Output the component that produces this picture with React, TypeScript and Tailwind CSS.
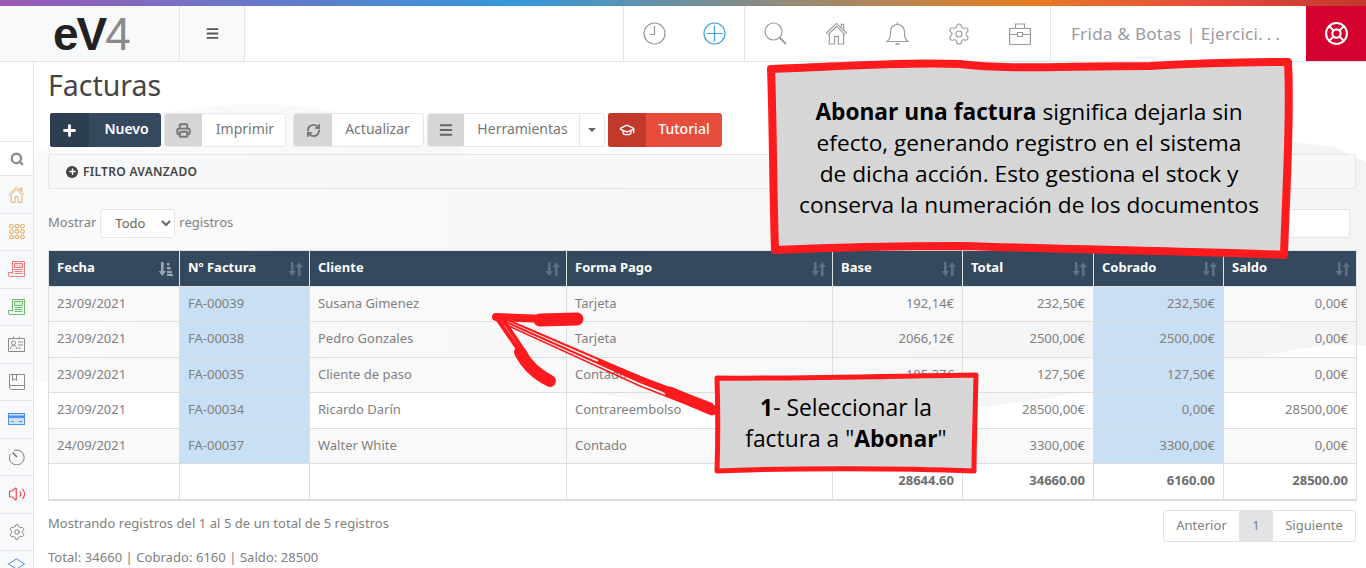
import { Search, Settings, LifeBuoy, Menu, Plus, Printer, RefreshCw, GraduationCap, Volume2 } from 'lucide-react';

const rows = [
  { fecha: '23/09/2021', num: 'FA-00039', cliente: 'Susana Gimenez', pago: 'Tarjeta', base: '192,14€', total: '232,50€', cobrado: '232,50€', saldo: '0,00€' },
  { fecha: '23/09/2021', num: 'FA-00038', cliente: 'Pedro Gonzales', pago: 'Tarjeta', base: '2066,12€', total: '2500,00€', cobrado: '2500,00€', saldo: '0,00€' },
  { fecha: '23/09/2021', num: 'FA-00035', cliente: 'Cliente de paso', pago: 'Contado', base: '105,37€', total: '127,50€', cobrado: '127,50€', saldo: '0,00€' },
  { fecha: '23/09/2021', num: 'FA-00034', cliente: 'Ricardo Darín', pago: 'Contrareembolso', base: '23553,72€', total: '28500,00€', cobrado: '0,00€', saldo: '28500,00€' },
  { fecha: '24/09/2021', num: 'FA-00037', cliente: 'Walter White', pago: 'Contado', base: '2727,27€', total: '3300,00€', cobrado: '3300,00€', saldo: '0,00€' },
];

const headers = ['Fecha', 'Nº Factura', 'Cliente', 'Forma Pago', 'Base', 'Total', 'Cobrado', 'Saldo'];

function SortIcon({ active }: { active?: boolean }) {
  return (
    <svg width="15" height="14" viewBox="0 0 15 14" className="absolute right-[6px] top-[11px]" fill={active ? '#9aa6b2' : '#5f7083'}>
      <path d="M3 0h2.6v9H8L4.3 14 .6 9H3z" />
      {active ? (
        <path d="M9 1h2.5v2.5H9zM9 5h3.5v2.5H9zM9 9h5v2.2H9zM9 12h6v2H9z" />
      ) : (
        <path d="M10 14h2.6V5H15L11.3 0 7.6 5H10z" />
      )}
    </svg>
  );
}

// house with the chimney and double roof line, used in header and sidebar
function IconHouse({ size, color }: { size: number; color: string }) {
  return (
    <svg width={size} height={size} viewBox="0 0 24 24" fill="none" stroke={color} strokeWidth="1.2">
      <path d="M1 12 12 1.5 23 12M3 13.5 12 4.5 21 13.5" />
      <path d="M17 6V2.5h2.5v6" />
      <path d="M4.5 12.5V23h5.5v-8h4v8h5.5V12.5" />
    </svg>
  );
}

function IconClock() {
  return (
    <svg width="23" height="23" viewBox="0 0 23 23" fill="none" stroke="#9a9a9a" strokeWidth="1.2">
      <circle cx="11.5" cy="11.5" r="10.5" />
      <path d="M11.5 4v8.5H6.5" />
    </svg>
  );
}

function IconAdd() {
  return (
    <svg width="23" height="23" viewBox="0 0 23 23" fill="none" stroke="#3f9fe0" strokeWidth="1.2">
      <circle cx="11.5" cy="11.5" r="10.5" />
      <path d="M11.5 3.5v16M3.5 11.5h16" />
    </svg>
  );
}

function IconLens() {
  return (
    <svg width="23" height="23" viewBox="0 0 23 23" fill="none" stroke="#9a9a9a" strokeWidth="1.2">
      <circle cx="9.5" cy="9.5" r="8.5" />
      <path d="M15.5 15.5 22 22" strokeWidth="1.8" />
    </svg>
  );
}

function IconBell() {
  return (
    <svg width="23" height="24" viewBox="0 0 23 24" fill="none" stroke="#9a9a9a" strokeWidth="1.2">
      <path d="M1 19.5c2.5-2 3.5-3.5 3.5-7.5V9.5C4.5 5.5 7.5 2.5 11.5 2.5s7 3 7 7V12c0 4 1 5.5 3.5 7.5z" />
      <path d="M11.5.5v2M9.5 22h4" strokeWidth="1.6" />
    </svg>
  );
}

function IconBag() {
  return (
    <svg width="22" height="22" viewBox="0 0 22 22" fill="none" stroke="#9a9a9a" strokeWidth="1.2">
      <path d="M.6 5.5h20.800v16H.6zM6.500 5.500V1h9v4.500M.6 11.500h7.900M13.500 11.500h7.900" />
      <path d="M8.500 9.500h5v4h-5z" />
    </svg>
  );
}

function IconPaper({ color, tint }: { color: string; tint: string }) {
  return (
    <svg width="17" height="16" viewBox="0 0 17 16" fill="none" stroke={color} strokeWidth="1">
      <path d="M4.5 12.5V.5h12v15H2a1.5 1.5 0 0 1-1.5-1.5v-2.5h4" />
      <path d="M6.5 2.5h8v4h-8z" fill={tint} />
      <path d="M6.5 8.5h8M6.5 10.5h8M6.5 12.5h8" />
    </svg>
  );
}

function IconGrid() {
  const spots = [2.5, 8, 13.5];
  return (
    <svg width="16" height="15" viewBox="0 0 16 15" fill="none" stroke="#e8a04c" strokeWidth="1">
      {spots.map((y) => spots.map((x) => <circle key={`${x}-${y}`} cx={x} cy={y - 0.5} r="1.9" />))}
    </svg>
  );
}

function IconContact() {
  return (
    <svg width="17" height="16" viewBox="0 0 17 16" fill="none" stroke="#8a8a8a" strokeWidth="1">
      <path d="M.5 2.5h16v13H.5zM5.5 2.5V.5M11.5 2.5V.5" />
      <circle cx="5.5" cy="7" r="2" />
      <path d="M2.5 13c0-2.5 1-3.5 3-3.5s3 1 3 3.5M10 6h5M10 9h5M10 12h3" />
    </svg>
  );
}

function IconBook() {
  return (
    <svg width="16" height="16" viewBox="0 0 16 16" fill="none" stroke="#8a8a8a" strokeWidth="1">
      <path d="M.5 13V.5h15v15H2.5a2 2 0 0 1-2-2.5 2 2 0 0 1 2-1.5h13" />
      <path d="M3.5.5v6l2-1.5 2 1.5v-6" />
    </svg>
  );
}

function IconCard() {
  return (
    <svg width="17" height="12" viewBox="0 0 17 12">
      <rect x="0.5" y="0.5" width="16" height="11" fill="#cfe0fb" stroke="#4f8df0" />
      <rect x="0.5" y="2.5" width="16" height="2.5" fill="#4f8df0" />
      <path d="M3 8.5h3M11 8.5h3" stroke="#4f8df0" />
    </svg>
  );
}

function IconGauge() {
  return (
    <svg width="16" height="16" viewBox="0 0 16 16" fill="none" stroke="#777" strokeWidth="1">
      <path d="M5 1.6A7.4 7.4 0 1 1 1.2 5" />
      <path d="M3.5 3.5 8 8" strokeWidth="1.6" />
    </svg>
  );
}

function IconHat() {
  return (
    <svg width="17" height="12" viewBox="0 0 17 12" fill="none" stroke="#4f8df0" strokeWidth="1">
      <path d="M.5 6 8.5.8 16.5 6 8.5 11z" />
    </svg>
  );
}

const sideIcon = 'flex h-[37.5px] items-center justify-center border-b border-[#e3e5ea]';

function Sidebar() {
  return (
    <aside className="relative flex w-[34px] shrink-0 flex-col border-r border-[#e3e5ea] bg-white">
      <div className="h-[80px] shrink-0 border-b border-[#e3e5ea]" />
      <div className="flex h-[34px] shrink-0 items-center justify-center border-b border-[#e3e5ea]">
        <Search size={14} strokeWidth={4} color="#8c8c8c" />
      </div>
      <div className="flex-1 bg-[#f8f9fb]">
        <div className={sideIcon}><IconHouse size={17} color="#e8a04c" /></div>
        <div className={sideIcon}><IconGrid /></div>
        <div className={sideIcon}><IconPaper color="#f0787c" tint="#fbd9da" /></div>
        <div className={sideIcon}><IconPaper color="#6cbb6c" tint="#d8efd8" /></div>
        <div className={sideIcon}><IconContact /></div>
        <div className={sideIcon}><IconBook /></div>
        <div className={sideIcon}><IconCard /></div>
        <div className={sideIcon}><IconGauge /></div>
        <div className={sideIcon}><Volume2 size={18} strokeWidth={1.5} color="#f0414f" /></div>
        <div className={sideIcon}><Settings size={18} strokeWidth={1.2} color="#777777" /></div>
        <div className="flex justify-center pt-[7px]"><IconHat /></div>
      </div>
    </aside>
  );
}

function Header() {
  return (
    <header className="flex h-[56px] shrink-0 border-b border-[#e3e5ea] bg-white">
      <div className="flex w-[180px] shrink-0 items-center border-r border-[#e3e5ea] bg-[#f8f9fb] pl-[53px]">
        <span className="text-[46px] leading-none font-bold tracking-[-2px] text-[#222] [font-family:'Liberation_Sans',sans-serif]">
          eV<span className="font-normal text-[#8a8a8a]">4</span>
        </span>
      </div>
      <div className="flex w-[65px] shrink-0 items-center justify-center border-r border-[#e3e5ea] bg-[#f8f9fb]">
        <Menu size={15} strokeWidth={3} color="#555555" />
      </div>
      <div className="flex-1" />
      <div className="flex w-[122px] items-center justify-around border-l border-r border-[#e3e5ea]">
        <IconClock />
        <IconAdd />
      </div>
      <div className="flex w-[306px] items-center justify-around border-r border-[#e3e5ea]">
        <IconLens />
        <IconHouse size={23} color="#9a9a9a" />
        <IconBell />
        <Settings size={24} strokeWidth={1.1} color="#9a9a9a" />
        <IconBag />
      </div>
      <div className="flex w-[255px] items-center pl-[20px] text-[17px] tracking-[0.3px] whitespace-nowrap text-[#9a9aa0]">
        Frida &amp; Botas | Ejercici<span className="tracking-[4px]">...</span>
      </div>
      <div className="flex w-[60px] items-center justify-center bg-[#d6002f]">
        <LifeBuoy size={25} strokeWidth={2} color="#ffffff" />
      </div>
    </header>
  );
}

function ToolButton({ icon, label, iconBg, bodyBg, text, w, iconW }: { icon: React.ReactNode; label: string; iconBg: string; bodyBg: string; text: string; w: string; iconW: string }) {
  return (
    <div className={`flex h-[34px] overflow-hidden rounded-[3px] ${w} ${bodyBg}`}>
      <div className={`flex shrink-0 items-center justify-center ${iconW} ${iconBg}`}>{icon}</div>
      <div className={`flex flex-1 items-center justify-center pb-[3px] text-[14px] ${text}`}>{label}</div>
    </div>
  );
}

function Toolbar() {
  return (
    <div className="flex h-[34px] items-center pl-[2px]">
      <ToolButton w="w-[111px]" iconW="w-[39px]" iconBg="bg-[#2c3e50]" bodyBg="bg-[#34495e]" text="pl-[3px] font-semibold text-white" label="Nuevo" icon={<Plus size={17} strokeWidth={4} color="#ffffff" />} />
      <div className="ml-[3px]">
        <ToolButton w="w-[122px] border border-[#e8e8e8]" iconW="w-[37px]" iconBg="bg-[#d6d6d6]" bodyBg="bg-white" text="pl-[3px] text-[#777777]" label="Imprimir" icon={<Printer size={15} strokeWidth={3} color="#777777" />} />
      </div>
      <div className="ml-[7px]">
        <ToolButton w="w-[131px] border border-[#e8e8e8]" iconW="w-[38px]" iconBg="bg-[#d6d6d6]" bodyBg="bg-white" text="text-[#777777]" label="Actualizar" icon={<RefreshCw size={15} strokeWidth={3} color="#777777" />} />
      </div>
      <div className="ml-[3px] flex h-[34px] w-[178px] overflow-hidden rounded-[3px] border border-[#e8e8e8] bg-white">
        <div className="flex w-[36px] shrink-0 items-center justify-center bg-[#d6d6d6]"><Menu size={16} strokeWidth={3} color="#666666" /></div>
        <div className="flex flex-1 items-center justify-center pb-[3px] pl-[2px] text-[14px] text-[#777777]">Herramientas</div>
        <div className="flex w-[25px] shrink-0 items-center justify-center border-l border-[#e8e8e8]">
          <span className="h-0 w-0 border-x-[4px] border-t-[4px] border-x-transparent border-t-[#666666]" />
        </div>
      </div>
      <div className="ml-[3px]">
        <ToolButton w="w-[114px]" iconW="w-[38px]" iconBg="bg-[#c0392b]" bodyBg="bg-[#e74c3c]" text="font-medium text-white" label="Tutorial" icon={<GraduationCap size={16} strokeWidth={2} color="#ffffff" />} />
      </div>
    </div>
  );
}

function InvoiceTable() {
  return (
    <table className="w-[1308px] table-fixed border-collapse border-b-2 border-[#dddddd] text-[13px] text-[#808080]">
      <colgroup>
        <col className="w-[131px]" />
        <col className="w-[130px]" />
        <col className="w-[257px]" />
        <col className="w-[266px]" />
        <col className="w-[130px]" />
        <col className="w-[131px]" />
        <col className="w-[130px]" />
        <col className="w-[133px]" />
      </colgroup>
      <thead>
        <tr className="h-[36px] bg-[#34495e] text-white">
          {headers.map((h, i) => (
            <th key={h} className="relative border border-[#dfe3e8] px-[8px] pb-[2px] text-left text-[13px] font-bold">
              {h}
              <SortIcon active={i === 0} />
            </th>
          ))}
        </tr>
      </thead>
      <tbody>
        {rows.map((r, i) => (
          <tr key={r.num} className={i % 2 === 0 ? 'h-[35px] bg-[#f9f9f9]' : 'h-[36px] [&>td]:pb-[2px]'}>
            <td className="border border-[#dddddd] px-[8px]">{r.fecha}</td>
            <td className="border border-[#dddddd] bg-[#c9dff3] px-[8px]">{r.num}</td>
            <td className="border border-[#dddddd] px-[8px]">{r.cliente}</td>
            <td className="border border-[#dddddd] px-[8px]">{r.pago}</td>
            <td className="border border-[#dddddd] px-[8px] text-right">{r.base}</td>
            <td className="border border-[#dddddd] px-[8px] text-right">{r.total}</td>
            <td className="border border-[#dddddd] bg-[#c9dff3] px-[8px] text-right">{r.cobrado}</td>
            <td className="border border-[#dddddd] px-[8px] text-right">{r.saldo}</td>
          </tr>
        ))}
        <tr className="h-[36px] align-top font-bold text-[#6e6e6e]">
          <td className="border border-[#dddddd]" />
          <td className="border border-[#dddddd]" />
          <td className="border border-[#dddddd]" />
          <td className="border border-[#dddddd]" />
          <td className="border border-[#dddddd] px-[8px] pt-[7px] text-right">28644.60</td>
          <td className="border border-[#dddddd] px-[8px] pt-[7px] text-right">34660.00</td>
          <td className="border border-[#dddddd] px-[8px] pt-[7px] text-right">6160.00</td>
          <td className="border border-[#dddddd] px-[8px] pt-[7px] text-right">28500.00</td>
        </tr>
      </tbody>
    </table>
  );
}

function Annotations() {
  return (
    <>
      <svg width="1366" height="568" className="pointer-events-none absolute top-0 left-0">
        <g fill="none" stroke="#ff1a1d" strokeLinecap="round" strokeLinejoin="round">
          <path d="M496 317 C525 318 555 320 575 319" strokeWidth="8" />
          <path d="M540 320 L577 319" strokeWidth="13" />
          <path d="M496 317 L520 352" strokeWidth="4" />
          <path d="M502 318 L526 354" strokeWidth="4" />
          <path d="M520 352 C528 368 540 376 550 381" strokeWidth="12" />
          <path d="M497 318 L640 382 L712 410" strokeWidth="2" />
          <path d="M503 318 L640 377 L712 404" strokeWidth="2" />
          <path d="M500 322 L640 386 L712 414" strokeWidth="1.5" />
          <path d="M600 362 L712 408" strokeWidth="5" />
          <path d="M670 392 L712 410" strokeWidth="11" />
        </g>
        <path
          d="M771 69 C850 66 900 62 960 64 C1010 70 1060 66 1150 66 C1200 63 1250 62 1288 62 C1291 120 1286 190 1284 255 C1230 252 1100 250 960 246 C880 246 820 248 775 250 C773 190 773 120 771 69Z"
          fill="#d6d6d6"
          stroke="#ff1a1d"
          strokeWidth="8"
          strokeLinejoin="round"
        />
        <path
          d="M717 378 C780 379 900 376 976 375 C975 420 974 450 974 471 C900 468 790 468 717 471 C718 440 718 410 717 378Z"
          fill="#d6d6d6"
          stroke="#ff1a1d"
          strokeWidth="5"
          strokeLinejoin="round"
        />
      </svg>
      <div className="absolute top-[96px] left-[776px] w-[506px] text-center text-[22.7px] leading-[31px] text-black [font-family:'Open_Sans',sans-serif]">
        <b>Abonar una factura</b> significa dejarla sin
        <br />
        efecto, generando registro en el sistema
        <br />
        de dicha acción. Esto gestiona el stock y
        <br />
        conserva la numeración de los documentos
      </div>
      <div className="absolute top-[392px] left-[720px] w-[252px] text-center text-[22.8px] leading-[31px] text-black [font-family:'Open_Sans',sans-serif]">
        <b>1</b>- Seleccionar la
        <br />
        factura a "<b>Abonar</b>"
      </div>
    </>
  );
}

export default function App() {
  return (
    <div className="relative flex h-[568px] w-[1366px] flex-col overflow-hidden bg-white [font-family:'Noto_Sans',sans-serif]">
      <div className="h-[6px] shrink-0 bg-[linear-gradient(to_right,#9b59b6,#3498db_38%,#e67e22_75%,#e74c3c_88%,#c0392b)]" />
      <Header />
      <div className="flex min-h-0 flex-1">
        <Sidebar />
        <main className="relative flex-1 pt-[6px] pl-[14px]">
          <svg width="1332" height="506" className="absolute top-0 left-0">
            <defs>
              <linearGradient id="wave">
                <stop offset="0" stopColor="#fafafa" />
                <stop offset="1" stopColor="#f4f4f4" />
              </linearGradient>
            </defs>
            <path
              d="M0 93 C60 60 150 42 226 42 C300 42 390 70 446 95 C520 125 640 130 740 110 C900 60 1200 70 1300 85 L1332 100 L1332 284 C1270 276 1180 310 1059 328 C950 350 800 365 532 328 C350 305 150 315 0 320Z"
              fill="url(#wave)"
            />
          </svg>
          <div className="relative">
            <h1 className="h-[34px] text-[28.5px] leading-[34px] font-normal text-[#444444]">Facturas</h1>
            <div className="mt-[11px]"><Toolbar /></div>
            <div className="mt-[7px] flex h-[35px] w-[1308px] items-center gap-[5px] rounded-[3px] border border-[#e5e5e5] bg-[#f6f8fa] pl-[17px] text-[12px] font-semibold tracking-[0.3px] text-[#444444]">
              <span className="flex h-[12px] w-[12px] items-center justify-center rounded-full bg-[#444444]"><Plus size={9} strokeWidth={4} color="#ffffff" /></span>
              FILTRO AVANZADO
            </div>
            <div className="mt-[20px] flex h-[29px] w-[1302px] items-center justify-between text-[13px] text-[#808080]">
              <div className="flex items-center pb-[1px]">
                Mostrar
                <select defaultValue="Todo" className="mx-[4px] h-[29px] w-[75px] rounded-[3px] border border-[#e5e5e5] bg-white pl-[10px] text-[13px] text-[#666666]">
                  <option>Todo</option>
                </select>
                registros
              </div>
              <div className="h-[29px] w-[170px] rounded-[3px] border border-[#e5e5e5] bg-white" />
            </div>
            <div className="mt-[12px]"><InvoiceTable /></div>
            <div className="mt-[9px] flex w-[1308px] items-start justify-between text-[13px] tracking-[0.05px] text-[#808080]">
              <div>
                <div className="pt-[4px] leading-[18px]">Mostrando registros del 1 al 5 de un total de 5 registros</div>
                <div className="mt-[16px] leading-[18px]">Total: 34660 | Cobrado: 6160 | Saldo: 28500</div>
              </div>
              <div className="flex h-[32px] overflow-hidden rounded-[3px] border border-[#e0e0e0] bg-white">
                <span className="flex w-[75px] items-center justify-center">Anterior</span>
                <span className="flex w-[34px] items-center justify-center bg-[#e2e3e5]">1</span>
                <span className="flex w-[82px] items-center justify-center">Siguiente</span>
              </div>
            </div>
          </div>
        </main>
      </div>
      <Annotations />
    </div>
  );
}
